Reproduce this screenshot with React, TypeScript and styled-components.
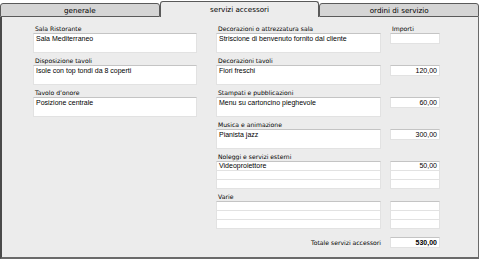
import React from "react";
import styled, { createGlobalStyle } from "styled-components";

const Global = createGlobalStyle`
  html, body { margin: 0; padding: 0; background: #ffffff; }
  body { font-family: "DejaVu Sans", "Liberation Sans", sans-serif; color: #000; }
`;

const Frame = styled.div`
  width: 481px;
  height: 259px;
  display: flex;
  flex-direction: column;
  box-sizing: border-box;
`;

const TabBar = styled.div`
  display: flex;
  height: 17px;
  align-items: flex-end;
  padding-right: 2px;
`;

const Tab = styled.div<{ $active?: boolean }>`
  flex: 1;
  box-sizing: border-box;
  height: ${(p) => (p.$active ? 16 : 14)}px;
  display: flex;
  align-items: center;
  justify-content: center;
  font-size: 7.2px;
  background: ${(p) => (p.$active ? "#ececec" : "#d5d5d5")};
  border: 1px solid #5a5a5a;
  border-bottom: ${(p) => (p.$active ? "none" : "1px solid #5a5a5a")};
  border-radius: 3px 3px 0 0;
  padding-top: ${(p) => (p.$active ? 0 : 1)}px;
`;

const Panel = styled.div`
  flex: 1;
  box-sizing: border-box;
  background: #ececec;
  border-left: 2px solid #4a4a4a;
  border-right: 1px solid #6a6a6a;
  border-bottom: 2px solid #6a6a6a;
  margin-right: 2px;
  display: flex;
  padding: 8px 0 0 31px;
  gap: 19px;
`;

const Column = styled.div`
  display: flex;
  flex-direction: column;
  gap: 4px;
`;

const Group = styled.div`
  display: flex;
  gap: 9px;
`;

const FieldCol = styled.div<{ $w: number }>`
  width: ${(p) => p.$w}px;
  display: flex;
  flex-direction: column;
`;

const Label = styled.div`
  font-size: 6.1px;
  line-height: 8px;
  height: 8px;
  padding-left: 2px;
  white-space: nowrap;
`;

const Box = styled.div<{ $h: number }>`
  box-sizing: border-box;
  height: ${(p) => p.$h}px;
  background: #fff;
  border: 1px solid #e2e2e2;
  border-top-color: #c4c4c4;
  font-family: "Liberation Sans", Arial, sans-serif;
  font-size: 7px;
  line-height: 9px;
  padding: 0 2px;
  white-space: nowrap;
  overflow: hidden;
`;

const Rows = styled.div`
  box-sizing: border-box;
  background: #fff;
  border: 1px solid #e2e2e2;
  border-top-color: #c4c4c4;
  display: flex;
  flex-direction: column;
`;

const Row = styled.div<{ $right?: boolean }>`
  height: 8px;
  font-family: "Liberation Sans", Arial, sans-serif;
  font-size: 7px;
  line-height: 8px;
  padding: 0 2px;
  text-align: ${(p) => (p.$right ? "right" : "left")};
  & + & { border-top: 1px solid #e2e2e2; }
  white-space: nowrap;
`;

const Amount = styled(Box)<{ $bold?: boolean }>`
  text-align: right;
  font-weight: ${(p) => (p.$bold ? "bold" : "normal")};
`;

const TotalRow = styled.div`
  display: flex;
  justify-content: flex-end;
  align-items: center;
  gap: 9px;
  margin-top: 4px;
`;

const TotalLabel = styled.div`
  font-size: 6.1px;
`;

const left = [
  { label: "Sala Ristorante", value: "Sala Mediterraneo" },
  { label: "Disposizione tavoli", value: "Isole con top tondi da 8 coperti" },
  { label: "Tavolo d’onore", value: "Posizione centrale" },
];

const right = [
  { label: "Decorazioni o attrezzatura sala", value: "Striscione di benvenuto fornito dal cliente", amount: "", head: "Importi" },
  { label: "Decorazioni tavoli", value: "Fiori freschi", amount: "120,00" },
  { label: "Stampati e pubblicazioni", value: "Menu su cartoncino pieghevole", amount: "60,00" },
  { label: "Musica e animazione", value: "Pianista jazz", amount: "300,00" },
];

const multi = [
  { label: "Noleggi e servizi esterni", rows: [["Videoproiettore", "50,00"], ["", ""], ["", ""]] },
  { label: "Varie", rows: [["", ""], ["", ""], ["", ""]] },
];

export default function App() {
  return (
    <Frame>
      <Global />
      <TabBar>
        <Tab>generale</Tab>
        <Tab $active>servizi accessori</Tab>
        <Tab>ordini di servizio</Tab>
      </TabBar>
      <Panel>
        <Column>
          {left.map((g) => (
            <FieldCol key={g.label} $w={164}>
              <Label>{g.label}</Label>
              <Box $h={20}>{g.value}</Box>
            </FieldCol>
          ))}
        </Column>
        <Column>
          {right.map((g) => (
            <Group key={g.label}>
              <FieldCol $w={165}>
                <Label>{g.label}</Label>
                <Box $h={20}>{g.value}</Box>
              </FieldCol>
              <FieldCol $w={50}>
                <Label>{g.head ?? ""}</Label>
                <Amount $h={11}>{g.amount}</Amount>
              </FieldCol>
            </Group>
          ))}
          {multi.map((g) => (
            <Group key={g.label}>
              <FieldCol $w={165}>
                <Label>{g.label}</Label>
                <Rows>
                  {g.rows.map((r, i) => (
                    <Row key={i}>{r[0]}</Row>
                  ))}
                </Rows>
              </FieldCol>
              <FieldCol $w={50}>
                <Label />
                <Rows>
                  {g.rows.map((r, i) => (
                    <Row key={i} $right>{r[1]}</Row>
                  ))}
                </Rows>
              </FieldCol>
            </Group>
          ))}
          <TotalRow>
            <TotalLabel>Totale servizi accessori</TotalLabel>
            <FieldCol $w={50}>
              <Amount $h={11} $bold>530,00</Amount>
            </FieldCol>
          </TotalRow>
        </Column>
      </Panel>
    </Frame>
  );
}
